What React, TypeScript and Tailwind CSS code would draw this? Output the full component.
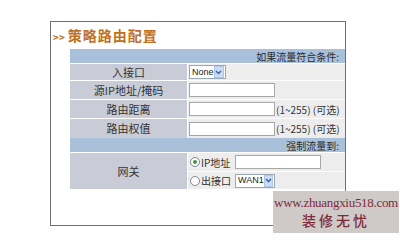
import React from 'react';

const cjk = { fontFamily: '"Noto Sans CJK SC", "Liberation Sans", sans-serif' };

function Radio({ checked }: { checked?: boolean }) {
    return (
        <span className="inline-flex shrink-0 items-center justify-center w-[10px] h-[10px] rounded-full border border-[#7a8a99] bg-white">
            {checked && <span className="w-[4px] h-[4px] rounded-full bg-[#3c9a3c]" />}
        </span>
    );
}

function Select({ value, width }: { value: string; width: string }) {
    return (
        <div className={`flex shrink-0 items-center h-[14px] border border-[#9aa8b8] bg-white ${width}`}>
            <span className="flex-1 pl-[2px] text-[9px] leading-none text-[#222] whitespace-nowrap" style={{ fontFamily: '"Liberation Sans", sans-serif' }}>
                {value}
            </span>
            <span className="flex items-center justify-center w-[11px] h-[12px] mr-[1px] bg-[#c9dcf3] border border-[#b0c6e4]">
                <svg width="7" height="5" viewBox="0 0 7 5">
                    <path d="M1 1 L3.5 3.5 L6 1" stroke="#3a5f9c" strokeWidth="1.4" fill="none" />
                </svg>
            </span>
        </div>
    );
}

function TextInput({ width }: { width: string }) {
    return <div className={`shrink-0 h-[14px] border border-[#a7a7a7] bg-white ${width}`} />;
}

function Row({ label, h, children }: { label: string; h: string; children: React.ReactNode }) {
    return (
        <div className={`flex ${h} border-t border-white`}>
            <div className="w-[117px] flex items-center justify-center bg-[#c9ccd6] text-[11px] text-[#333]">{label}</div>
            <div className="flex-1 flex items-center gap-[1px] pl-[1px] bg-[#ededed] border-l border-white text-[10px] text-[#333] whitespace-nowrap">
                {children}
            </div>
        </div>
    );
}

function Header({ text }: { text: string }) {
    return (
        <div className="h-[14px] flex items-center justify-end pr-[6px] bg-[#a9c0db] text-[10px] text-[#2b2b2b]">
            {text}
        </div>
    );
}

export default function App() {
    return (
        <div className="relative w-[400px] h-[240px] bg-white overflow-hidden" style={cjk}>
            <div className="ml-[50px] mt-[21px] w-[296px] h-[205px] border border-[#6f6f6f]">
                <div className="h-[27px] pl-[2px] pt-[4px] text-[14px] leading-[18px] font-bold tracking-[1px] text-[#c0701e]">
                    <span className="text-[10px] mr-[3px] tracking-normal">&gt;&gt;</span>策略路由配置
                </div>
                <div className="ml-[19px]">
                    <Header text="如果流量符合条件:" />
                    <Row label="入接口" h="h-[17px]">
                        <Select value="None" width="w-[37px]" />
                    </Row>
                    <Row label="源IP地址/掩码" h="h-[19px]">
                        <TextInput width="w-[86px]" />
                    </Row>
                    <Row label="路由距离" h="h-[19px]">
                        <TextInput width="w-[86px]" />
                        <span>(1~255) (可选)</span>
                    </Row>
                    <Row label="路由权值" h="h-[20px]">
                        <TextInput width="w-[86px]" />
                        <span>(1~255) (可选)</span>
                    </Row>
                    <Header text="强制流量到:" />
                    <div className="flex h-[37px] border-t border-white">
                        <div className="w-[117px] flex items-center justify-center bg-[#c9ccd6] text-[11px] text-[#333]">网关</div>
                        <div className="flex-1 flex flex-col border-l border-white text-[10px] text-[#333] whitespace-nowrap">
                            <div className="h-[19px] flex items-center pl-[2px] bg-[#ededed]">
                                <Radio checked />
                                <span className="w-[35px] pl-[1px]">IP地址</span>
                                <TextInput width="w-[86px]" />
                            </div>
                            <div className="h-[18px] flex items-center pl-[2px] bg-[#ededed] border-t border-white">
                                <Radio />
                                <span className="w-[35px] pl-[1px]">出接口</span>
                                <Select value="WAN1" width="w-[40px]" />
                            </div>
                        </div>
                    </div>
                </div>
            </div>
            <div className="absolute left-[273px] top-[191px] w-[126px] h-[42px] bg-[#cfc9c8] flex flex-col items-center justify-center">
                <div className="text-[13px] leading-[16px] text-[#7d2c3a] tracking-[-0.3px]" style={{ fontFamily: '"Liberation Serif", serif' }}>
                    www.zhuangxiu518.com
                </div>
                <div className="text-[14px] leading-[18px] font-medium tracking-[3px] text-[#7d2c3a]">装修无忧</div>
            </div>
        </div>
    );
}
